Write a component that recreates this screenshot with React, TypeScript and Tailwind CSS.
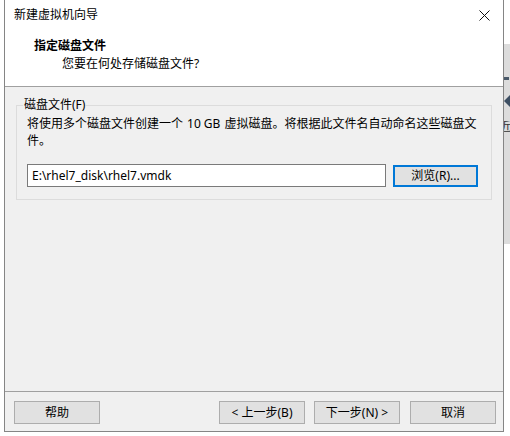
const font = { fontFamily: '"Noto Sans", "Noto Sans CJK SC", sans-serif' };

function Btn({ label, className = '' }: { label: string; className?: string }) {
  return (
    <div
      className={`h-[23px] w-[86px] flex items-center justify-center bg-[#e1e1e1] border border-[#adadad] text-[12px] text-black ${className}`}
    >
      {label}
    </div>
  );
}

export default function App() {
  return (
    <div className="w-[510px] h-[436px] bg-white flex overflow-hidden" style={font}>
      <div className="w-[4px] shrink-0" />
      <div className="w-[500px] h-[432px] shrink-0 border-x border-b border-[#858585] flex flex-col">
        {/* title bar */}
        <div className="h-[30px] bg-white flex items-center justify-between pl-[9px] pr-[10px]">
          <span className="text-[12px] text-black leading-none">新建虚拟机向导</span>
          <svg width="11" height="11" viewBox="0 0 11 11" className="mr-[3px]">
            <path d="M0.5 0.5 L10.5 10.5 M10.5 0.5 L0.5 10.5" stroke="#111" strokeWidth="1" />
          </svg>
        </div>

        {/* header */}
        <div className="h-[56px] bg-white pl-[29px] pt-[8px]">
          <div className="text-[12px] font-bold text-black leading-[16px]">指定磁盘文件</div>
          <div className="text-[12px] text-black leading-[16px] pl-[28px] mt-[2px]">您要在何处存储磁盘文件?</div>
        </div>

        {/* body */}
        <div className="flex-1 bg-[#f0f0f0] border-t border-[#a0a0a0] pt-[10px]">
          <fieldset className="mx-[11px] border border-[#dcdcdc] px-[10px] pb-[12px]">
            <legend className="ml-[-4px] px-[1px] text-[12px] leading-[16px] text-black">磁盘文件(F)</legend>
            <div className="mt-[2px] text-[12px] leading-[17px] text-black">
              <div className="whitespace-nowrap">
                将使用多个磁盘文件创建一个<span className="px-[4px]">10 GB</span>虚拟磁盘。将根据此文件名自动命名这些磁盘文
              </div>
              <div>件。</div>
            </div>
            <div className="mt-[15px] flex items-start gap-[7px]">
              <div className="w-[359px] h-[23px] bg-white border border-[#7a7a7a] flex items-center pl-[4px] text-[12px] text-black">
                E:\rhel7_disk\rhel7.vmdk
              </div>
              <div className="mt-[1px] w-[85px] h-[22px] bg-[#e1e1e1] border-2 border-[#0078d7] flex items-center justify-center text-[12px] text-black">
                浏览(R)...
              </div>
            </div>
          </fieldset>
        </div>

        {/* footer */}
        <div className="h-[40px] bg-[#f0f0f0] border-t border-[#a0a0a0] pt-[9px] flex justify-between pl-[9px] pr-[7px]">
          <Btn label="帮助" />
          <div className="flex gap-[9px]">
            <Btn label="< 上一步(B)" />
            <Btn label="下一步(N) >" className="mr-[1px]" />
            <Btn label="取消" />
          </div>
        </div>
      </div>

      {/* window behind */}
      <div className="w-[6px] shrink-0 flex flex-col">
        <div className="h-[44px] bg-white" />
        <div className="h-[200px] bg-[#dcdcdc] flex flex-col">
          <div className="mt-[33px] h-[3px] w-[5px] bg-[#4a5a6a]" />
          <div className="mt-[15px] w-0 h-0 border-y-[6px] border-y-transparent border-r-[6px] border-r-[#3d4f63]" />
          <div className="mt-[14px] w-[6px] h-[12px] overflow-hidden">
            <div className="text-[12px] leading-none text-[#333] -ml-[5px]">近</div>
          </div>
        </div>
        <div className="flex-1 bg-white" />
      </div>
    </div>
  );
}
